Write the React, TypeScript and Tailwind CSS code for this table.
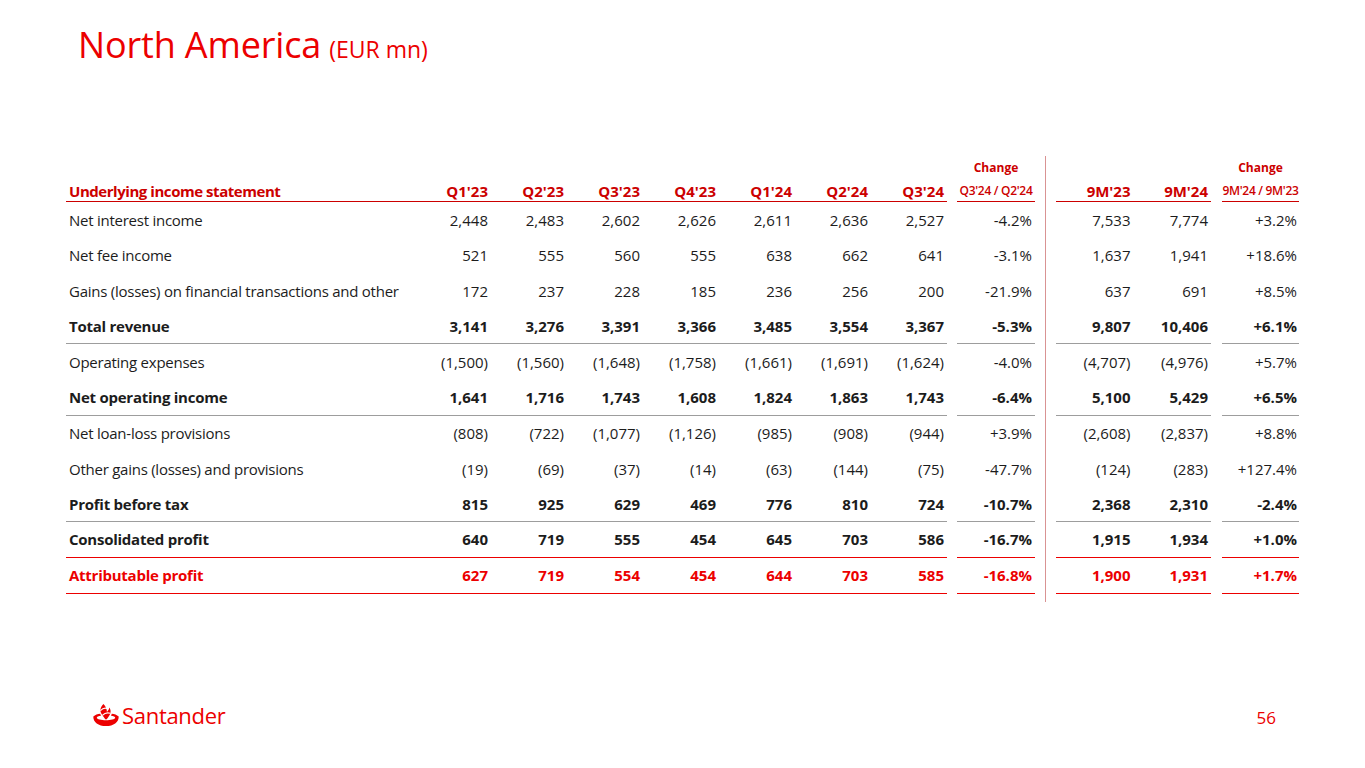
import React from "react";

type Row = {
  label: string;
  q: string[];
  chg: string;
  a: string;
  b: string;
  chg9: string;
  bold?: boolean;
  red?: boolean;
  line?: "gray" | "red";
};

const rows: Row[] = [
  { label: "Net interest income", q: ["2,448", "2,483", "2,602", "2,626", "2,611", "2,636", "2,527"], chg: "-4.2%", a: "7,533", b: "7,774", chg9: "+3.2%" },
  { label: "Net fee income", q: ["521", "555", "560", "555", "638", "662", "641"], chg: "-3.1%", a: "1,637", b: "1,941", chg9: "+18.6%" },
  { label: "Gains (losses) on financial transactions and other", q: ["172", "237", "228", "185", "236", "256", "200"], chg: "-21.9%", a: "637", b: "691", chg9: "+8.5%" },
  { label: "Total revenue", q: ["3,141", "3,276", "3,391", "3,366", "3,485", "3,554", "3,367"], chg: "-5.3%", a: "9,807", b: "10,406", chg9: "+6.1%", bold: true, line: "gray" },
  { label: "Operating expenses", q: ["(1,500)", "(1,560)", "(1,648)", "(1,758)", "(1,661)", "(1,691)", "(1,624)"], chg: "-4.0%", a: "(4,707)", b: "(4,976)", chg9: "+5.7%" },
  { label: "Net operating income", q: ["1,641", "1,716", "1,743", "1,608", "1,824", "1,863", "1,743"], chg: "-6.4%", a: "5,100", b: "5,429", chg9: "+6.5%", bold: true, line: "gray" },
  { label: "Net loan-loss provisions", q: ["(808)", "(722)", "(1,077)", "(1,126)", "(985)", "(908)", "(944)"], chg: "+3.9%", a: "(2,608)", b: "(2,837)", chg9: "+8.8%" },
  { label: "Other gains (losses) and provisions", q: ["(19)", "(69)", "(37)", "(14)", "(63)", "(144)", "(75)"], chg: "-47.7%", a: "(124)", b: "(283)", chg9: "+127.4%" },
  { label: "Profit before tax", q: ["815", "925", "629", "469", "776", "810", "724"], chg: "-10.7%", a: "2,368", b: "2,310", chg9: "-2.4%", bold: true, line: "gray" },
  { label: "Consolidated profit", q: ["640", "719", "555", "454", "645", "703", "586"], chg: "-16.7%", a: "1,915", b: "1,934", chg9: "+1.0%", bold: true, line: "red" },
  { label: "Attributable profit", q: ["627", "719", "554", "454", "644", "703", "585"], chg: "-16.8%", a: "1,900", b: "1,931", chg9: "+1.7%", bold: true, red: true, line: "red" },
];

const quarters = ["Q1'23", "Q2'23", "Q3'23", "Q4'23", "Q1'24", "Q2'24", "Q3'24"];

function Divider({ h }: { h: string }) {
  return (
    <div className={`w-[21px] flex justify-center ${h}`}>
      <div className="w-px h-full bg-[#d99393]" />
    </div>
  );
}

function Flame() {
  return (
    <svg width="26" height="22" viewBox="0 0 26 22" className="block">
      <path
        d="M0.3 12.4 C2.2 10.8 4.6 10 7.2 9.7 L8 11.8 C5.4 12.1 3.8 12.8 3.8 13.7 C3.8 15.2 8.4 16.2 13 16.2 C17.6 16.2 22.2 15.2 22.2 13.7 C22.2 12.8 20.6 12.1 18 11.8 L18.8 9.7 C21.4 10 23.8 10.8 25.7 12.4 C25.9 18.2 20.5 22 13 22 C5.5 22 0.1 18.2 0.3 12.4 Z"
        fill="#ec0000"
      />
      <path
        d="M10.4 0 C7.2 3.6 6.6 6.6 8.6 10 L11.9 14.8 C12.4 15.6 13.6 15.6 14.1 14.8 C17.4 10.8 18.8 7.4 16.4 3.6 C15.9 5.6 15.1 7 13.9 8.1 C13.9 5 12.7 2.2 10.4 0 Z"
        fill="#ec0000"
      />
      <path d="M7.4 6.6 C9.4 4.6 12.6 3.8 14.6 4.8" stroke="#fff" strokeWidth="1.2" fill="none" />
      <path d="M9.4 11.4 C11.4 9.2 14.6 8.4 17.2 9.2" stroke="#fff" strokeWidth="1.2" fill="none" />
    </svg>
  );
}

export default function App() {
  const font = { fontFamily: '"Open Sans", "Noto Sans", sans-serif' };
  return (
    <div className="w-[1365px] h-[768px] bg-white flex flex-col overflow-hidden" style={font}>
      <div className="pl-[78px] pt-[27px] flex items-baseline text-[#ec0000] leading-none">
        <span className="text-[36px] tracking-[-0.15px]">North America</span>
        <span className="text-[23px] ml-[8px]">(EUR mn)</span>
      </div>

      <div className="pl-[66px] mt-[93px] text-[15px] text-[#1c1c1c]">
        {/* header */}
        <div className="flex h-[46px] items-end">
          <div className="w-[881px] flex border-b border-[#cc0000] leading-[20px] font-bold text-[#cc0000]">
            <div className="flex-1 pl-[3px] tracking-[-0.45px]">Underlying income statement</div>
            {quarters.map((q) => (
              <div key={q} className="w-[76px] text-right pr-[3px]">{q}</div>
            ))}
          </div>
          <div className="w-[10px]" />
          <div className="w-[78px] border-b border-[#cc0000] text-center text-[#cc0000]">
            <div className="text-[12px] font-bold leading-[16px] mb-[5px]">Change</div>
            <div className="text-[12px] font-semibold leading-[20px] tracking-[-0.3px]">Q3'24 / Q2'24</div>
          </div>
          <Divider h="h-[46px]" />
          <div className="w-[155px] flex border-b border-[#cc0000] leading-[20px] font-bold text-[#cc0000]">
            <div className="w-[77.5px] text-right pr-[3px]">9M'23</div>
            <div className="w-[77.5px] text-right pr-[3px]">9M'24</div>
          </div>
          <div className="w-[11px]" />
          <div className="w-[77px] border-b border-[#cc0000] text-center text-[#cc0000]">
            <div className="text-[12px] font-bold leading-[16px] mb-[5px]">Change</div>
            <div className="text-[12px] font-semibold leading-[20px] tracking-[-0.3px]">9M'24 / 9M'23</div>
          </div>
        </div>

        {rows.map((r) => {
          const border =
            r.line === "gray" ? "border-b border-[#9d9d9d]" : r.line === "red" ? "border-b border-[#ec0000]" : "";
          const txt = `${r.bold ? "font-bold" : ""} ${r.red ? "text-[#ec0000]" : ""}`;
          return (
            <div key={r.label} className={`flex h-[35.6px] ${txt}`}>
              <div className={`w-[881px] flex items-center ${border}`}>
                <div className="flex-1 pl-[3px] tracking-[-0.25px] whitespace-nowrap">{r.label}</div>
                {r.q.map((v, i) => (
                  <div key={i} className="w-[76px] text-right pr-[3px]">{v}</div>
                ))}
              </div>
              <div className="w-[10px]" />
              <div className={`w-[78px] flex items-center justify-end pr-[3px] ${border}`}>{r.chg}</div>
              <Divider h="h-[35.6px]" />
              <div className={`w-[155px] flex items-center ${border}`}>
                <div className="w-[77.5px] text-right pr-[3px]">{r.a}</div>
                <div className="w-[77.5px] text-right pr-[3px]">{r.b}</div>
              </div>
              <div className="w-[11px]" />
              <div className={`w-[77px] flex items-center justify-end pr-[2px] ${border}`}>{r.chg9}</div>
            </div>
          );
        })}
        <div className="flex h-[8px]">
          <div className="w-[969px]" />
          <Divider h="h-[8px]" />
        </div>
      </div>

      <div className="mt-auto pb-[42px] pl-[93px] pr-[89px] flex items-center justify-between">
        <div className="flex items-center">
          <Flame />
          <span className="ml-[3px] text-[22px] font-medium text-[#ec0000] leading-none tracking-[-0.3px]">Santander</span>
        </div>
        <span className="text-[17px] text-[#ec0000] leading-none mt-[6px]">56</span>
      </div>
    </div>
  );
}
